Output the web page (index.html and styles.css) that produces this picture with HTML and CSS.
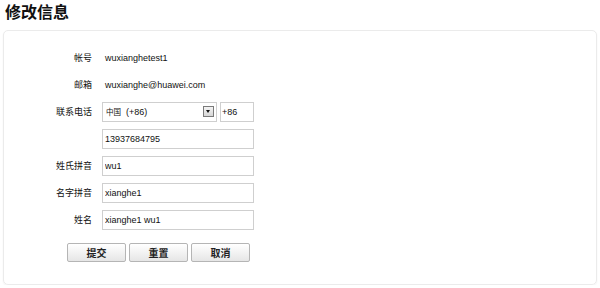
FILE: index.html
```html
<!DOCTYPE html>
<html lang="zh-CN">
<head>
  <meta charset="UTF-8">
  <meta name="viewport" content="width=device-width, initial-scale=1.0">
  <link rel="stylesheet" href="styles.css">
  <title>修改信息</title>
</head>
<body>

  <h2 class="titulo">修改信息</h2>

  <div class="panel">
    <div class="fila">
      <span class="etiqueta">帐号</span>
      <span class="valor">wuxianghetest1</span>
    </div>
    <div class="fila">
      <span class="etiqueta">邮箱</span>
      <span class="valor">wuxianghe@huawei.com</span>
    </div>
    <div class="fila">
      <span class="etiqueta">联系电话</span>
      <div class="selector">
        <span><span class="pais">中国</span>&nbsp;&nbsp;(+86)</span>
        <span class="flecha"></span>
      </div>
      <input type="text" class="campo corto" value="+86">
    </div>
    <div class="fila">
      <span class="etiqueta"></span>
      <input type="text" class="campo" value="13937684795">
    </div>
    <div class="fila">
      <span class="etiqueta">姓氏拼音</span>
      <input type="text" class="campo" value="wu1">
    </div>
    <div class="fila">
      <span class="etiqueta">名字拼音</span>
      <input type="text" class="campo" value="xianghe1">
    </div>
    <div class="fila">
      <span class="etiqueta">姓名</span>
      <input type="text" class="campo" value="xianghe1 wu1">
    </div>

    <div class="botones">
      <button class="boton">提交</button>
      <button class="boton">重置</button>
      <button class="boton">取消</button>
    </div>
  </div>

</body>
</html>
```

FILE: styles.css
```css
body {
  font-family: "Liberation Sans", Arial, "Noto Sans CJK SC", sans-serif;
  background: #fff;
  color: #333;
  margin: 0;
  padding: 0;
}

.titulo {
  font-size: 16px;
  font-weight: bold;
  color: #111;
  margin: 0;
  padding: 4px 5px 0;
  height: 26px;
  line-height: 18px;
}

.panel {
  margin: 0 3px;
  height: 255px;
  box-sizing: border-box;
  border: 1px solid #ebebeb;
  border-radius: 5px;
  box-shadow: 0 1px 2px rgba(0, 0, 0, 0.06);
  padding-top: 13px;
}

.fila {
  display: flex;
  align-items: center;
  height: 27px;
}

.etiqueta {
  width: 98px;
  text-align: right;
  font-size: 9px;
  color: #111;
  padding-right: 10px;
  box-sizing: border-box;
}

.valor {
  font-size: 9px;
  color: #111;
  padding-left: 3px;
}

.campo {
  width: 152px;
  height: 20px;
  box-sizing: border-box;
  border: 1px solid #cfcfcf;
  padding: 0 2px;
  font-family: "Liberation Sans", Arial, sans-serif;
  font-size: 9px;
  color: #111;
  margin: 0;
  outline: none;
}

.campo.corto {
  width: 34px;
  margin-left: 3px;
  padding: 0 1px;
}

.selector {
  width: 115px;
  height: 20px;
  box-sizing: border-box;
  border: 1px solid #cfcfcf;
  display: flex;
  align-items: center;
  justify-content: space-between;
  padding: 0 2px 0 3px;
  font-size: 9px;
  color: #111;
}

.pais {
  font-size: 7.5px;
}

.flecha {
  width: 9px;
  height: 9px;
  border: 1px solid #7a7a7a;
  background: linear-gradient(to bottom, #f4f4f4, #d6d6d6);
  position: relative;
}

.flecha::after {
  content: "";
  position: absolute;
  left: 2px;
  top: 3px;
  border-left: 2.5px solid transparent;
  border-right: 2.5px solid transparent;
  border-top: 3px solid #111;
}

.botones {
  display: flex;
  gap: 3px;
  padding-left: 63px;
  margin-top: 10px;
}

.boton {
  width: 59px;
  height: 19px;
  border: 1px solid #b5b5b5;
  border-radius: 2px;
  background: linear-gradient(to bottom, #ffffff, #e6e6e6);
  font-family: "Liberation Sans", Arial, "Noto Sans CJK SC", sans-serif;
  font-size: 10px;
  font-weight: bold;
  color: #222;
  padding: 0;
}
```
